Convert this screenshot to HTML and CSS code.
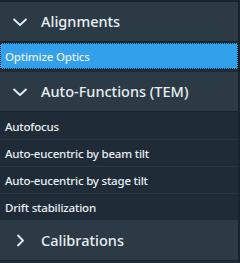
FILE: index.html
```
<!DOCTYPE html>
<html lang="en">
<head>
    <meta charset="UTF-8">
    <title>Functions</title>
    <link rel="stylesheet" href="styles.css">
</head>
<body>
    <nav class="panel">
        <section class="group">
            <div class="group-header">
                <svg class="chev" width="16" height="10" viewBox="0 0 16 10"><path d="M1.5 2 L8 8 L14.5 2" fill="none" stroke="#e8eef2" stroke-width="1.8"/></svg>
                <span>Alignments</span>
            </div>
            <ul>
                <li class="item item-active">Optimize Optics</li>
            </ul>
        </section>

        <section class="group">
            <div class="group-header">
                <svg class="chev" width="16" height="10" viewBox="0 0 16 10"><path d="M1.5 2 L8 8 L14.5 2" fill="none" stroke="#e8eef2" stroke-width="1.8"/></svg>
                <span>Auto-Functions (TEM)</span>
            </div>
            <ul class="items">
                <li class="item">Autofocus</li>
                <li class="item">Auto-eucentric by beam tilt</li>
                <li class="item">Auto-eucentric by stage tilt</li>
                <li class="item">Drift stabilization</li>
            </ul>
        </section>

        <section class="group">
            <div class="group-header">
                <svg class="chev" width="16" height="14" viewBox="0 0 16 14"><path d="M5.5 1 L11 6.5 L5.5 12" fill="none" stroke="#e8eef2" stroke-width="1.8"/></svg>
                <span>Calibrations</span>
            </div>
        </section>
    </nav>
</body>
</html>
```

FILE: styles.css
```
*{
    padding: 0;
    margin: 0;
    box-sizing: border-box;
}
body{
    background-color: #1c2731;
    font-family: "Noto Sans", sans-serif;
    color: #e8eef2;
}
li{
    list-style: none;
}
.panel{
    width: 240px;
    height: 263px;
    border-top: 2px solid #1a242c;
    border-right: 2px solid #1a242c;
    background-color: #1f2c38;
}
.group-header{
    height: 40px;
    display: flex;
    align-items: center;
    gap: 13px;
    padding-left: 12px;
    background-color: #2c3a45;
    border-bottom: 1px solid #1a242c;
    font-size: 14.5px;
    font-weight: 500;
    span{
        padding-bottom: 2px;
    }
}
.items{
    padding-top: 1px;
}
.item{
    height: 27px;
    display: flex;
    align-items: center;
    padding: 1px 0 0 5px;
    font-size: 11.5px;
    font-weight: 500;
    letter-spacing: -0.2px;
    border-bottom: 1px solid #2a3844;
}
.item-active{
    height: 26px;
    margin: 1px 0 3px;
    padding-top: 0;
    background-color: #33a0ec;
    outline: 1px dotted #1d2a36;
    outline-offset: -1px;
    border-bottom: none;
}
```
